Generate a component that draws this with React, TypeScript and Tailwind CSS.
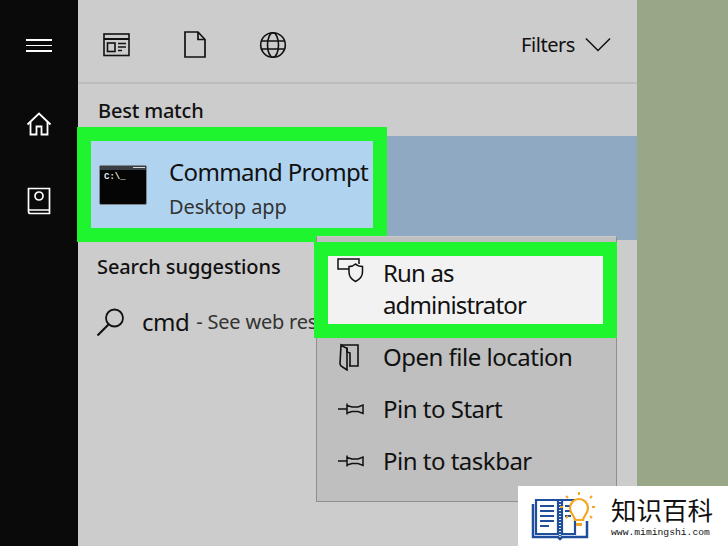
const font = "font-['Noto_Sans','Open_Sans',sans-serif]";

function NewsIcon() {
  return (
    <svg width="28" height="24" viewBox="0 0 28 24" fill="none" stroke="#111" strokeWidth="1.6">
      <rect x="1" y="1" width="25" height="21.5" />
      <path d="M1 6h25" strokeWidth="2" />
      <rect x="4.5" y="10" width="7.5" height="8.5" />
      <path d="M15 10.5h8M15 14h8M15 17.5h4" />
    </svg>
  );
}

function FileIcon() {
  return (
    <svg width="24" height="28" viewBox="0 0 24 28" fill="none" stroke="#111" strokeWidth="1.7">
      <path d="M2 1h13l7 7.5V26H2z" />
      <path d="M15 1v7.5h7" />
    </svg>
  );
}

function GlobeIcon() {
  return (
    <svg width="28" height="28" viewBox="0 0 28 28" fill="none" stroke="#111" strokeWidth="1.6">
      <circle cx="14" cy="14" r="12.3" />
      <ellipse cx="14" cy="14" rx="5.5" ry="12.3" />
      <path d="M2.5 10h23M2.5 18h23" />
    </svg>
  );
}

function HomeIcon() {
  return (
    <svg width="26" height="24" viewBox="0 0 26 24" fill="none" stroke="#fff" strokeWidth="1.8">
      <path d="M1.5 12.5 13 1.5l11.5 11" />
      <path d="M4.5 10v12.5h6v-8h5v8h6V10" />
    </svg>
  );
}

function BookIcon() {
  return (
    <svg width="24" height="28" viewBox="0 0 24 28" fill="none" stroke="#fff" strokeWidth="1.7">
      <path d="M1.5 23V1.5h21v25H3.5a2 2 0 0 1-2-2V23h21" />
      <circle cx="12" cy="9" r="4" />
    </svg>
  );
}

function CmdIcon() {
  return (
    <div className="w-[48px] h-[40px] bg-[#050505] border border-[#7d858c] rounded-[2px] relative overflow-hidden shrink-0">
      <div className="h-[4px] bg-[#3a3f44]" />
      <div className="absolute right-[1px] top-[1px] w-[12px] h-[1px] bg-[#d8d8d8]" />
      <span className="absolute left-[4px] top-[6px] text-[9px] leading-[10px] font-bold text-[#e8e8e8] font-['Liberation_Mono',monospace]">
        C:\_
      </span>
    </div>
  );
}

function PinIcon() {
  return (
    <svg width="28" height="16" viewBox="0 0 28 16" fill="none" stroke="#111" strokeWidth="1.5">
      <path d="M1 8h9" />
      <path d="M10 2.5v11M10 4.5l5 1.5h6l5-2v8.5l-5-2h-6l-5 1.5" />
    </svg>
  );
}

function ShieldIcon() {
  return (
    <svg width="30" height="26" viewBox="0 0 30 26" fill="none" stroke="#111" strokeWidth="1.5">
      <path d="M13 12H2V2h21v5" />
      <path d="M13 9.5c3 0 5-1 6.5-2.5 1.5 1.5 3.5 2.5 7 2.5V15c0 4-3 7.5-7 9.5-4-2-6.500-5.500-6.500-9.500z" fill="#f2f2f2" />
    </svg>
  );
}

function FolderIcon() {
  return (
    <svg width="24" height="28" viewBox="0 0 24 28" fill="none" stroke="#111" strokeWidth="1.6">
      <path d="M4 2h17v21h-9" />
      <path d="M4 2c3 2 4 3 6 3v22l-6-4-1-2z" />
      <path d="M10 5v4l3 1v13" />
    </svg>
  );
}

function LogoIcon() {
  return (
    <svg width="64" height="50" viewBox="0 0 64 50" fill="none">
      <path d="M2 13v33h25l2 2 2-2h25V30" stroke="#1f4e9c" strokeWidth="2.5" />
      <path d="M5 9h22v34H5zM31 9h13v34H31z" stroke="#1f4e9c" strokeWidth="2.2" />
      <path d="M9 15h14M9 20h14M9 25h14M9 30h14M9 35h9M34 15h6M34 20h6M34 25h6" stroke="#1f4e9c" strokeWidth="2" />
      <path d="M29 8v37" stroke="#1f4e9c" strokeWidth="3" strokeDasharray="2 1" />
      <path d="M44 29c0-4-5-6-5-12a9 9 0 0 1 18 0c0 6-5 8-5 12z" fill="#fff" stroke="#f5a623" strokeWidth="2.2" />
      <path d="M45 32h6v3h-6z" fill="#f5a623" />
      <path d="M48 1v3M35 5l2 2M61 5l-2 2M32 16h-3M64 16h-3M35 27l2-2M61 27l-2-2" stroke="#f5a623" strokeWidth="2" />
    </svg>
  );
}

function MenuRow({ icon, label }: { icon: React.ReactNode; label: string }) {
  return (
    <div className="flex items-center h-[52px]">
      <div className="w-[66px] pl-[20px] shrink-0">{icon}</div>
      <span className="text-[24px] leading-[32px] tracking-[-0.5px] text-[#111]">{label}</span>
    </div>
  );
}

export default function App() {
  return (
    <div className={`relative w-[728px] h-[546px] overflow-hidden flex bg-[#98a887] ${font}`}>
      {/* left rail */}
      <div className="w-[78px] shrink-0 bg-[#0a0a0a] flex flex-col items-center">
        <div className="mt-[39px] flex flex-col gap-[4px] w-[26px]">
          <div className="h-[1.5px] bg-white" />
          <div className="h-[1.5px] bg-white" />
          <div className="h-[1.5px] bg-white" />
        </div>
        <div className="mt-[60px]"><HomeIcon /></div>
        <div className="mt-[51px]"><BookIcon /></div>
      </div>

      {/* search panel */}
      <div className="w-[559px] shrink-0 bg-[#cccccc] flex flex-col">
        <div className="h-[84px] shrink-0 border-b-2 border-[#bdbdbd] flex items-center pl-[25px] pr-[26px] pt-[7px]">
          <NewsIcon />
          <div className="ml-[52px]"><FileIcon /></div>
          <div className="ml-[52px]"><GlobeIcon /></div>
          <span className="ml-auto text-[20px] tracking-[-0.45px] text-[#111]">Filters</span>
          <svg className="ml-[10px]" width="26" height="20" viewBox="0 0 28 20" fill="none" stroke="#111" strokeWidth="1.6">
            <path d="M1 3l13 13L27 3" />
          </svg>
        </div>
        <div className="h-[52px] shrink-0 pl-[20px] pt-[12px] text-[20px] leading-[30px] tracking-[-0.2px] font-medium text-[#111]">Best match</div>
        <div className="h-[104px] shrink-0 bg-[#8fa9c2]" />
        <div className="pl-[19px] pt-[12px] text-[20px] leading-[30px] tracking-[-0.1px] font-medium text-[#111]">Search suggestions</div>
        <div className="flex items-center pl-[18px] mt-[24px] whitespace-nowrap">
          <svg width="30" height="30" viewBox="0 0 30 30" fill="none" stroke="#111" strokeWidth="1.8">
            <circle cx="18.5" cy="11" r="8.5" />
            <path d="M12.5 17.5 1.5 28.5" strokeWidth="2.2" />
          </svg>
          <span className="ml-[16px] text-[24px] leading-[32px] tracking-[-0.5px] text-[#111]">cmd</span>
          <span className="ml-[7px] text-[20px] leading-[32px] tracking-[-0.2px] text-[#333]">- See web results</span>
        </div>
      </div>

      {/* Command Prompt highlight */}
      <div className="absolute left-[77px] top-[127px] w-[310px] h-[115px] border-[14px] border-[#1ff52e] bg-[#b0d4f0] flex items-center pl-[8px]">
        <CmdIcon />
        <div className="ml-[22px] pt-[7px]">
          <div className="text-[24px] leading-[34px] tracking-[-0.65px] text-[#111] whitespace-nowrap">Command Prompt</div>
          <div className="mt-[4px] text-[20px] leading-[28px] tracking-[-0.1px] text-[#333] whitespace-nowrap">Desktop app</div>
        </div>
      </div>

      {/* context menu */}
      <div className="absolute left-[316px] top-[236px] w-[301px] h-[266px] bg-[#bfbfbf] border border-[#8f8f8f] border-t-[#c8c8c8] flex flex-col pt-[94px]">
        <MenuRow icon={<FolderIcon />} label="Open file location" />
        <MenuRow icon={<PinIcon />} label="Pin to Start" />
        <MenuRow icon={<PinIcon />} label="Pin to taskbar" />
      </div>
      <div className="absolute left-[314px] top-[242px] w-[303px] h-[96px] border-[14px] border-[#1ff52e] bg-[#f2f2f2] flex items-start">
        <div className="w-[54px] pl-[8px] pt-[1px] shrink-0"><ShieldIcon /></div>
        <div className="text-[24px] leading-[32px] tracking-[-0.85px] text-[#111] pl-[1px] pt-[1px]">
          Run as<br />administrator
        </div>
      </div>

      {/* watermark */}
      <div className="absolute left-[518px] top-[486px] w-[210px] h-[60px] bg-white flex items-center pl-[13px]">
        <LogoIcon />
        <div className="ml-[16px]">
          <div className="text-[25.5px] leading-[30px] text-[#111] font-['Noto_Sans_CJK_SC',sans-serif]">知识百科</div>
          <div className="mt-[3px] text-[9.7px] leading-[12px] text-[#111] font-['Liberation_Mono',monospace]">www.mimingshi.com</div>
        </div>
      </div>
    </div>
  );
}
